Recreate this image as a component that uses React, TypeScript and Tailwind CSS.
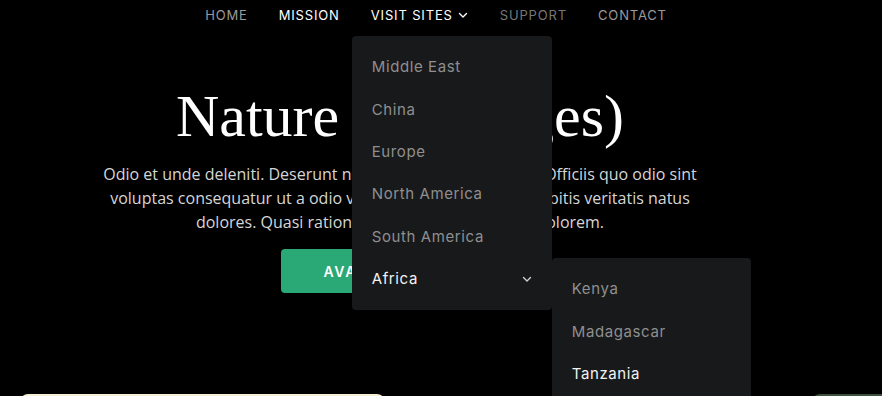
import React from "react";

const Chevron = ({ className }: { className?: string }) => (
  <svg viewBox="0 0 12 12" className={className} fill="none" stroke="currentColor" strokeWidth="1.4" strokeLinecap="round" strokeLinejoin="round">
    <path d="M2.5 4.5 L6 8 L9.5 4.5" />
  </svg>
);

const regions = ["Middle East", "China", "Europe", "North America", "South America"];
const africa = ["Kenya", "Madagascar", "Tanzania"];

export default function App() {
  return (
    <div className="w-[882px] h-[396px] overflow-hidden bg-black relative" style={{ fontFamily: "Inter, 'Liberation Sans', sans-serif" }}>
      <nav className="flex justify-center pr-[10px] pt-[7px] gap-[31px] text-[13px] tracking-[0.065em] uppercase leading-[16px]">
        <a className="text-[#9a9a9a]">Home</a>
        <a className="text-white">Mission</a>
        <div className="relative">
          <a className="text-white flex items-center gap-[4px]">
            Visit Sites <Chevron className="w-[12px] h-[12px]" />
          </a>
          <div className="absolute left-[-19px] top-[29px] w-[200px] bg-[#18191b] rounded-[4px] pt-[10px] pb-[10px] z-10 normal-case tracking-[0.04em] text-[15px]">
            {regions.map((r) => (
              <div key={r} className="h-[42.4px] flex items-center px-[20px] text-[#8f8f8f]">{r}</div>
            ))}
            <div className="h-[42.4px] flex items-center justify-between px-[20px] text-[#f2f2f2] relative">
              <span>Africa</span>
              <Chevron className="w-[12px] h-[12px] text-[#d0d0d0] mr-[-1px]" />
              <div className="absolute left-[200px] top-0 w-[199px] h-[200px] bg-[#18191b] rounded-[4px] pt-[10px]">
                {africa.map((c, i) => (
                  <div key={c} className={"h-[42.4px] flex items-center px-[20px] " + (i === 2 ? "text-[#f2f2f2]" : "text-[#8f8f8f]")}>{c}</div>
                ))}
              </div>
            </div>
          </div>
        </div>
        <a className="text-[#777777]">Support</a>
        <a className="text-[#9a9a9a]">Contact</a>
      </nav>

      <section className="flex flex-col items-center pr-[82px] mt-[58px]">
        <h1 className="text-white text-[60px] leading-[70px]" style={{ fontFamily: "'Liberation Serif', 'DejaVu Serif', serif" }}>
          Nature (Heritages)
        </h1>
        <p className="mt-[11px] max-w-[610px] text-center text-[16px] leading-[24px] text-[#d6d6d6]" style={{ fontFamily: "'Open Sans', 'Noto Sans', sans-serif" }}>
          Odio et unde deleniti. Deserunt numquam exercitationem. Officiis quo odio sint voluptas consequatur ut a odio voluptatem. Sit dolorem debitis veritatis natus dolores. Quasi ratione sint. Sit quaerat ipsum dolorem.
        </p>
        <button className="mt-[15px] w-[238px] h-[44px] rounded-[4px] bg-[#2aa876] text-white text-[14px] font-semibold tracking-[0.12em]">
          AVAILABLE TOURS
        </button>
      </section>

      <div className="absolute left-[20px] top-[394px] w-[365px] h-[20px] rounded-t-[8px] bg-[#f6f0d6]" />
      <div className="absolute left-[812px] top-[394px] w-[80px] h-[20px] rounded-t-[8px] bg-[#3d4f3d]" />
    </div>
  );
}
